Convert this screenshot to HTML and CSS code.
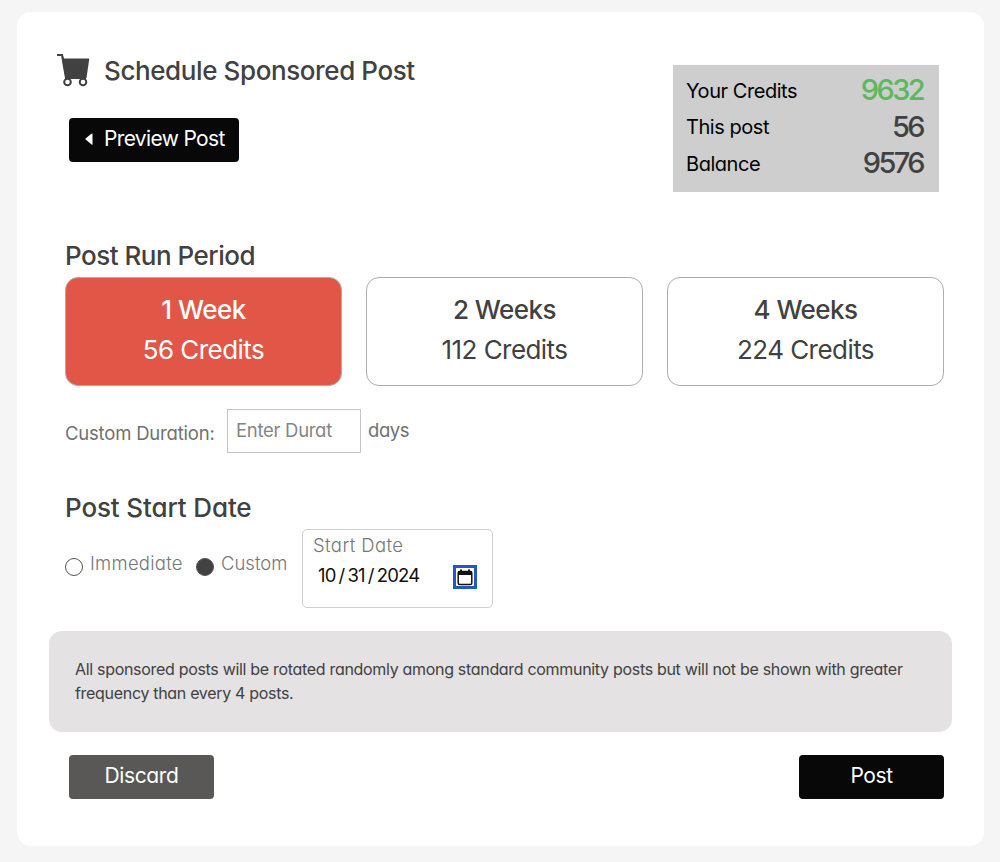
FILE: index.html
```html
<!DOCTYPE html>
<html lang="en">
<head>
    <meta charset="UTF-8">
    <meta name="viewport" content="width=device-width, initial-scale=1.0">
    <title>Schedule Sponsored Post</title>
    <link rel="stylesheet" href="styles.css">
</head>
<body>
    <div class="card">
        <div class="header">
            <div>
                <div class="title-row">
                    <svg class="cart" width="34" height="35" viewBox="0 0 34 35">
                        <path d="M0 2H5L6.2 6M5 2L9 25H29" fill="none" stroke="#414141" stroke-width="2"/>
                        <path d="M5 5.5H32.3L29.5 25H8.5Z" fill="#414141"/>
                        <circle cx="10.5" cy="29" r="3.3" fill="#fff" stroke="#414141" stroke-width="2"/>
                        <circle cx="26" cy="29" r="3.3" fill="#fff" stroke="#414141" stroke-width="2"/>
                    </svg>
                    <h1>Schedule Sponsored Post</h1>
                </div>
                <button type="button" class="btn btn-preview">
                    <svg width="8" height="12" viewBox="0 0 8 12"><path d="M7.5 .6V11.4Q7 12 6 11L.6 6.6Q0 6 .6 5.4L6 1Q7 0 7.5 .6Z" fill="#fff"/></svg>
                    <span>Preview Post</span>
                </button>
            </div>
            <div class="credits">
                <div class="credit-row"><span>Your Credits</span><b class="green">9632</b></div>
                <div class="credit-row"><span>This post</span><b>56</b></div>
                <div class="credit-row"><span>Balance</span><b>9576</b></div>
            </div>
        </div>

        <h2 class="period-title">Post Run Period</h2>
        <div class="periods">
            <div class="period selected">
                <strong>1 Week</strong>
                <span>56 Credits</span>
            </div>
            <div class="period">
                <strong>2 Weeks</strong>
                <span>112 Credits</span>
            </div>
            <div class="period">
                <strong>4 Weeks</strong>
                <span>224 Credits</span>
            </div>
        </div>

        <div class="duration">
            <label for="duration">Custom Duration:</label>
            <input type="text" id="duration" placeholder="Enter Durat">
            <span class="days">days</span>
        </div>

        <h2 class="start-title">Post Start Date</h2>
        <div class="start">
            <label class="radio immediate"><i class="dot"></i><span>Immediate</span></label>
            <label class="radio custom"><i class="dot checked"></i><span>Custom</span></label>
            <div class="date-box">
                <div class="date-label">Start Date</div>
                <div class="date-row">
                    <span class="date"><span>10</span><span>/</span><span>31</span><span>/</span><span>2024</span></span>
                    <span class="calendar">
                        <svg width="16" height="17" viewBox="0 0 16 17">
                            <rect x="1.2" y="2.6" width="13.6" height="13" rx="1.5" fill="#fff" stroke="#111" stroke-width="1.5"/>
                            <path d="M1 2H15V6H1ZM3 .5H5V3H3ZM11 .5H13V3H11Z" fill="#111"/>
                        </svg>
                    </span>
                </div>
            </div>
        </div>

        <div class="notice">All sponsored posts will be rotated randomly among standard community posts but will not be shown with greater<br>frequency than every 4 posts.</div>

        <div class="actions">
            <button type="button" class="btn btn-discard">Discard</button>
            <button type="button" class="btn">Post</button>
        </div>
    </div>
</body>
</html>
```

FILE: styles.css
```css
* {
    box-sizing: border-box;
}

body {
    margin: 0;
    padding: 12px 16px 16px 17px;
    background-color: #f5f5f5;
    font-family: Inter, "Open Sans", sans-serif;
    font-feature-settings: "cv11";
    color: #414141;
}

.card {
    height: 834px;
    padding: 41px 40px 0 48px;
    background-color: white;
    border-radius: 14px;
}

.header {
    display: flex;
    justify-content: space-between;
    height: 186px;
}

.title-row {
    display: flex;
    align-items: center;
    gap: 13px;
    height: 35px;
    margin-left: -8px;
}

h1, h2 {
    margin: 0;
    font-size: 26px;
    font-weight: 500;
    line-height: 34px;
    white-space: nowrap;
}

h1 {
    letter-spacing: -0.4px;
}

.btn {
    width: 145px;
    height: 44px;
    padding: 0 0 3px;
    border: none;
    border-radius: 4px;
    background-color: #080808;
    color: white;
    font-family: inherit;
    font-feature-settings: inherit;
    font-size: 21px;
    letter-spacing: -0.4px;
}

.btn-preview {
    display: flex;
    align-items: center;
    gap: 11px;
    width: 170px;
    margin: 30px 0 0 4px;
    padding-left: 16px;
    letter-spacing: -0.65px;
    white-space: nowrap;
}

.credits {
    width: 266px;
    height: 127px;
    margin: 12px 5px 0 0;
    padding: 7px 13px;
    background-color: #cecece;
}

.credit-row {
    display: flex;
    justify-content: space-between;
    align-items: center;
    height: 36.5px;
    color: #000;
    font-size: 20px;
    letter-spacing: -0.45px;
}

.credit-row span {
    padding-top: 1px;
}

.credit-row b {
    margin-right: 3px;
    color: #414141;
    font-size: 29px;
    font-weight: 500;
    line-height: 34px;
    letter-spacing: -2.6px;
}

.credit-row .green {
    color: #5cb85c;
}

.period-title {
    height: 38px;
    letter-spacing: -0.5px;
}

.periods {
    display: grid;
    grid-template-columns: repeat(3, 1fr);
    gap: 24px;
}

.period {
    display: flex;
    flex-direction: column;
    align-items: center;
    height: 109px;
    padding-top: 12px;
    border: 1px solid #adadad;
    border-radius: 13px;
    font-size: 26px;
    line-height: 40px;
    letter-spacing: -0.55px;
}

.period strong {
    font-weight: 500;
}

.selected {
    background-color: #e15647;
    color: white;
}

.duration {
    display: flex;
    align-items: center;
    height: 44px;
    margin-top: 23px;
    font-size: 18.5px;
    color: #707070;
}

.duration label {
    width: 162px;
    padding-top: 4px;
    white-space: nowrap;
    letter-spacing: -0.2px;
}

.duration input {
    width: 134px;
    height: 44px;
    padding: 0 8px 2px;
    border: 1px solid #c4c4c4;
    font: inherit;
    font-feature-settings: inherit;
    letter-spacing: -0.3px;
}

.duration input::placeholder {
    color: #858585;
}

.days {
    padding: 0 0 2px 7px;
    letter-spacing: -0.4px;
}

.start-title {
    margin-top: 38px;
    height: 38px;
    letter-spacing: -0.13px;
}

.start {
    display: flex;
    height: 79px;
}

.radio {
    display: flex;
    height: 68px;
    align-items: center;
    font-size: 18.5px;
    font-weight: 300;
    color: #777;
}

.immediate {
    width: 131px;
    letter-spacing: 0.25px;
}

.custom {
    width: 106px;
}

.dot {
    width: 18px;
    height: 18px;
    margin: 7px 7px 0 0;
    border: 1px solid #555;
    border-radius: 50%;
}

.checked {
    background-color: #414141;
}

.date-box {
    width: 191px;
    height: 79px;
    padding: 3px 15px 0 10px;
    border: 1px solid #cfcfcf;
    border-radius: 5px;
}

.date-label {
    font-size: 18.5px;
    font-weight: 300;
    line-height: 24px;
    letter-spacing: 0.4px;
    color: #777;
}

.date-row {
    display: flex;
    justify-content: space-between;
    align-items: center;
    height: 40px;
    padding-left: 5px;
    color: #111;
    font-size: 18.5px;
}

.date {
    display: flex;
    gap: 3px;
    padding-bottom: 4px;
    letter-spacing: -0.8px;
}

.calendar {
    display: flex;
    align-items: center;
    justify-content: center;
    width: 24px;
    height: 24px;
    border: 3px solid #2159c4;
}

.notice {
    height: 101px;
    margin: 23px -8px 0 -16px;
    padding: 26px 26px 0;
    border-radius: 13px;
    background-color: #e4e2e3;
    font-size: 16px;
    line-height: 24px;
    letter-spacing: -0.31px;
    white-space: nowrap;
}

.actions {
    display: flex;
    justify-content: space-between;
    margin: 23px 0 0 4px;
}

.btn-discard {
    background-color: #595856;
}
```
